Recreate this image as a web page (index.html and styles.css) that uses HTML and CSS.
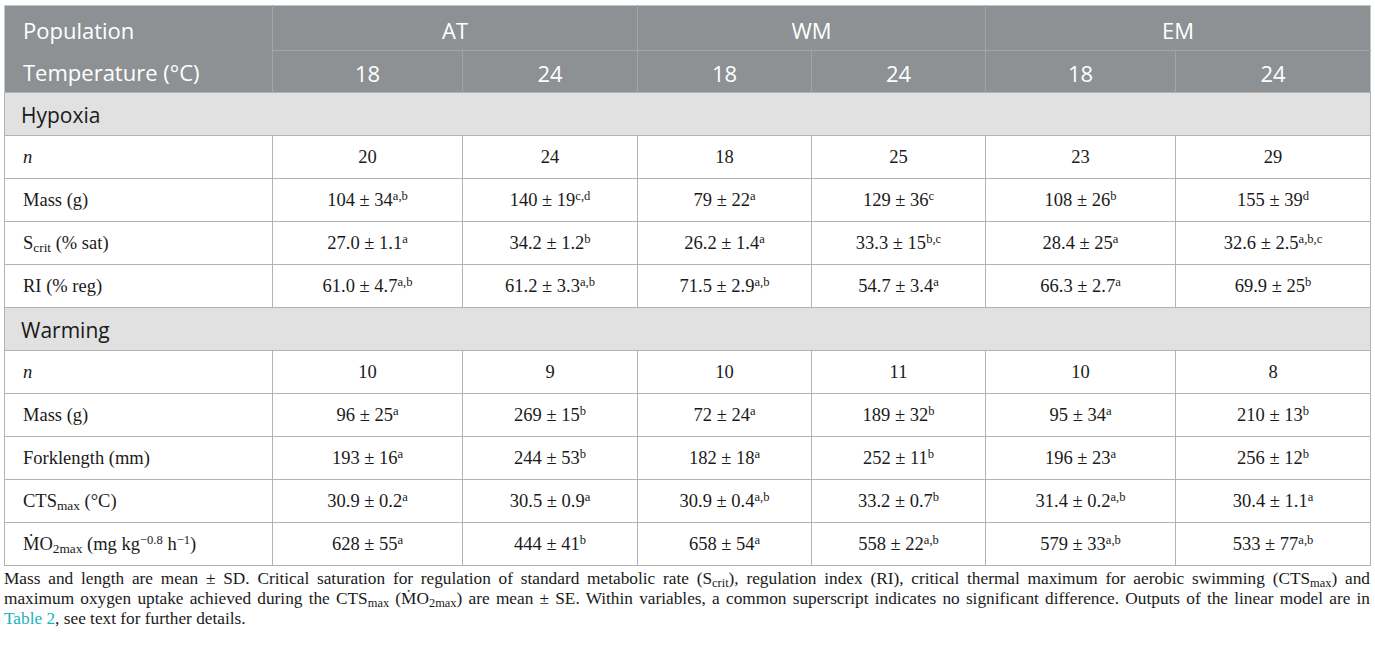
FILE: index.html
```html
<!DOCTYPE html>
<html lang="en">
<head>
    <meta charset="UTF-8">
    <title>Table 1</title>
    <link rel="stylesheet" href="styles.css">
</head>
<body>
    <div class="table-wrap">
        <table class="data-table">
            <colgroup>
                <col class="c-label">
                <col class="c-at18">
                <col class="c-at24">
                <col class="c-wm18">
                <col class="c-wm24">
                <col class="c-em18">
                <col class="c-em24">
            </colgroup>
            <thead>
                <tr class="head-top">
                    <th class="head-label">Population</th>
                    <th class="group" colspan="2">AT</th>
                    <th class="group" colspan="2">WM</th>
                    <th class="group" colspan="2">EM</th>
                </tr>
                <tr class="head-sub">
                    <th class="head-label">Temperature (°C)</th>
                    <th>18</th>
                    <th>24</th>
                    <th>18</th>
                    <th>24</th>
                    <th>18</th>
                    <th>24</th>
                </tr>
            </thead>
            <tbody>
                <tr class="section">
                    <td colspan="7">Hypoxia</td>
                </tr>
                <tr>
                    <td class="label"><i>n</i></td>
                    <td>20</td>
                    <td>24</td>
                    <td>18</td>
                    <td>25</td>
                    <td>23</td>
                    <td>29</td>
                </tr>
                <tr>
                    <td class="label">Mass (g)</td>
                    <td>104 ± 34<sup>a,b</sup></td>
                    <td>140 ± 19<sup>c,d</sup></td>
                    <td>79 ± 22<sup>a</sup></td>
                    <td>129 ± 36<sup>c</sup></td>
                    <td>108 ± 26<sup>b</sup></td>
                    <td>155 ± 39<sup>d</sup></td>
                </tr>
                <tr>
                    <td class="label">S<sub>crit</sub> (% sat)</td>
                    <td>27.0 ± 1.1<sup>a</sup></td>
                    <td>34.2 ± 1.2<sup>b</sup></td>
                    <td>26.2 ± 1.4<sup>a</sup></td>
                    <td>33.3 ± 15<sup>b,c</sup></td>
                    <td>28.4 ± 25<sup>a</sup></td>
                    <td>32.6 ± 2.5<sup>a,b,c</sup></td>
                </tr>
                <tr>
                    <td class="label">RI (% reg)</td>
                    <td>61.0 ± 4.7<sup>a,b</sup></td>
                    <td>61.2 ± 3.3<sup>a,b</sup></td>
                    <td>71.5 ± 2.9<sup>a,b</sup></td>
                    <td>54.7 ± 3.4<sup>a</sup></td>
                    <td>66.3 ± 2.7<sup>a</sup></td>
                    <td>69.9 ± 25<sup>b</sup></td>
                </tr>
                <tr class="section">
                    <td colspan="7">Warming</td>
                </tr>
                <tr>
                    <td class="label"><i>n</i></td>
                    <td>10</td>
                    <td>9</td>
                    <td>10</td>
                    <td>11</td>
                    <td>10</td>
                    <td>8</td>
                </tr>
                <tr>
                    <td class="label">Mass (g)</td>
                    <td>96 ± 25<sup>a</sup></td>
                    <td>269 ± 15<sup>b</sup></td>
                    <td>72 ± 24<sup>a</sup></td>
                    <td>189 ± 32<sup>b</sup></td>
                    <td>95 ± 34<sup>a</sup></td>
                    <td>210 ± 13<sup>b</sup></td>
                </tr>
                <tr>
                    <td class="label">Forklength (mm)</td>
                    <td>193 ± 16<sup>a</sup></td>
                    <td>244 ± 53<sup>b</sup></td>
                    <td>182 ± 18<sup>a</sup></td>
                    <td>252 ± 11<sup>b</sup></td>
                    <td>196 ± 23<sup>a</sup></td>
                    <td>256 ± 12<sup>b</sup></td>
                </tr>
                <tr>
                    <td class="label">CTS<sub>max</sub> (°C)</td>
                    <td>30.9 ± 0.2<sup>a</sup></td>
                    <td>30.5 ± 0.9<sup>a</sup></td>
                    <td>30.9 ± 0.4<sup>a,b</sup></td>
                    <td>33.2 ± 0.7<sup>b</sup></td>
                    <td>31.4 ± 0.2<sup>a,b</sup></td>
                    <td>30.4 ± 1.1<sup>a</sup></td>
                </tr>
                <tr>
                    <td class="label">ṀO<sub>2max</sub> (mg kg<sup>−0.8</sup> h<sup>−1</sup>)</td>
                    <td>628 ± 55<sup>a</sup></td>
                    <td>444 ± 41<sup>b</sup></td>
                    <td>658 ± 54<sup>a</sup></td>
                    <td>558 ± 22<sup>a,b</sup></td>
                    <td>579 ± 33<sup>a,b</sup></td>
                    <td>533 ± 77<sup>a,b</sup></td>
                </tr>
            </tbody>
        </table>

        <div class="footnote">
            <span class="fn-line">Mass and length are mean ± SD. Critical saturation for regulation of standard metabolic rate (S<sub>crit</sub>), regulation index (RI), critical thermal maximum for aerobic swimming (CTS<sub>max</sub>) and</span>
            <span class="fn-line">maximum oxygen uptake achieved during the CTS<sub>max</sub> (ṀO<sub>2max</sub>) are mean ± SE. Within variables, a common superscript indicates no significant difference. Outputs of the linear model are in</span>
            <span class="fn-line fn-last"><a href="#" class="ref">Table 2</a>, see text for further details.</span>
        </div>
    </div>
</body>
</html>
```

FILE: styles.css
```css
* {
    margin: 0;
    padding: 0;
    box-sizing: border-box;
}

body {
    background: #ffffff;
    color: #1a1a1a;
    font-family: "Liberation Serif", "Times New Roman", serif;
}

.table-wrap {
    width: 1366px;
    margin: 5px 0 0 4px;
}

.data-table {
    width: 1366px;
    table-layout: fixed;
    border-collapse: collapse;
    border: 1px solid #c3c7c6;
}

.c-label { width: 268px; }
.c-at18 { width: 190px; }
.c-at24 { width: 175px; }
.c-wm18 { width: 174px; }
.c-wm24 { width: 174px; }
.c-em18 { width: 190px; }
.c-em24 { width: 195px; }

/* header */
thead th {
    background: #8d9193;
    color: #ffffff;
    font-family: "Open Sans", "Noto Sans", sans-serif;
    font-weight: 400;
    font-size: 22px;
    text-align: center;
    vertical-align: middle;
    border-left: 1px solid #a3a6a7;
}

thead .head-label {
    text-align: left;
    padding-left: 18px;
    border-left: none;
}

.head-top {
    height: 45px;
}

.head-top th {
    padding-top: 3px;
}

.head-top .group {
    border-bottom: 1px solid #a3a6a7;
}

.head-sub {
    height: 42px;
}

.head-sub th {
    padding-top: 2px;
}

/* body */
tbody td {
    border: 1px solid #b3b3b3;
    font-size: 18.5px;
    text-align: center;
    vertical-align: middle;
    padding-top: 1px;
    white-space: nowrap;
}

tbody tr {
    height: 43px;
}

tbody .label {
    text-align: left;
    padding-left: 18px;
}

.section td {
    background: #e0e1e0;
    font-family: "Open Sans", "Noto Sans", sans-serif;
    font-size: 21px;
    text-align: left;
    padding-left: 16px;
    color: #1a1a1a;
}

tbody tr.section {
    height: 43px;
}

sup {
    font-size: 0.68em;
    line-height: 0;
    vertical-align: 0.5em;
}

sub {
    font-size: 0.72em;
    line-height: 0;
    vertical-align: -0.25em;
}

.footnote {
    margin-top: 3px;
    font-size: 17.3px;
    line-height: 20px;
    color: #1a1a1a;
}

.fn-line {
    display: block;
    text-align: justify;
    text-align-last: justify;
    white-space: nowrap;
}

.fn-line.fn-last {
    text-align-last: left;
}

.ref {
    color: #1ab0c0;
    text-decoration: none;
}
```
